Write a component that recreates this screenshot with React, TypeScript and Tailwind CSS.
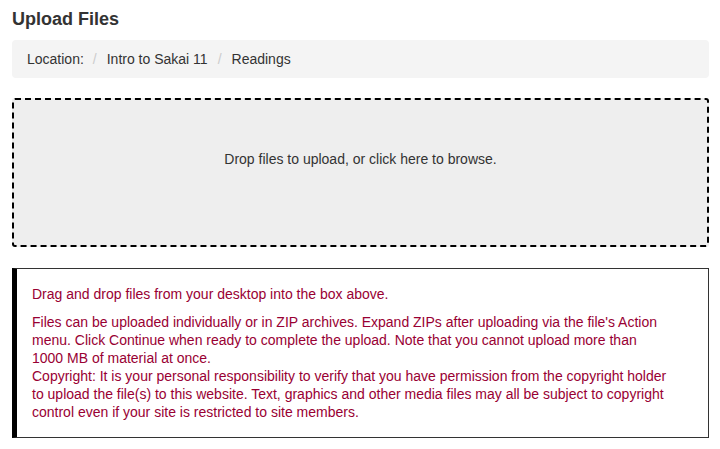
export default function App() {
  return (
    <div
      className="min-h-[449px] w-[720px] bg-white pl-3 pr-[11px] text-[14px] text-[#333]"
      style={{ fontFamily: '"Liberation Sans", Arial, sans-serif' }}
    >
      <h1 className="pt-[9px] text-[18px] font-bold leading-[20px] text-[#333]">Upload Files</h1>
      <div className="mt-[11px] flex h-[38px] items-center rounded-[4px] bg-[#f4f4f4] pl-[15px]">
        <span>Location:</span>
        <span className="ml-[9px] mr-[10px] text-[#ccc]">/</span>
        <span>Intro to Sakai 11</span>
        <span className="ml-[10px] mr-[10px] text-[#ccc]">/</span>
        <span>Readings</span>
      </div>
      <div className="mt-[20px] h-[149px] cursor-pointer rounded-[3px] border-2 border-dashed border-black bg-[#eee] pt-[49px] text-center leading-[20px]">
        Drop files to upload, or click here to browse.
      </div>
      <div className="mt-[21px] border border-l-[5px] border-[#333] border-l-black px-[15px] pb-[16px] pt-[16px] leading-[18px] text-[#990033]">
        <p>Drag and drop files from your desktop into the box above.</p>
        <p className="mt-[10px]">
          Files can be uploaded individually or in ZIP archives. Expand ZIPs after uploading via the file's Action
          <br />
          menu. Click Continue when ready to complete the upload. Note that you cannot upload more than
          <br />
          1000 MB of material at once.
          <br />
          Copyright: It is your personal responsibility to verify that you have permission from the copyright holder
          <br />
          to upload the file(s) to this website. Text, graphics and other media files may all be subject to copyright
          <br />
          control even if your site is restricted to site members.
        </p>
      </div>
    </div>
  );
}
